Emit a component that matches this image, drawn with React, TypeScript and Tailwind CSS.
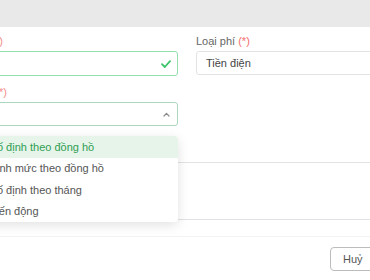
import React from 'react'

const options = [
  'Cố định theo đồng hồ',
  'Định mức theo đồng hồ',
  'Cố định theo tháng',
  'Biến động',
]

const App = () => {
  const [selected] = React.useState(0)

  return (
    <div className="w-[370px] h-[280px] overflow-hidden bg-white font-['Liberation_Sans',Arial,sans-serif] text-[11px] text-[#444]">
      <div className="h-[27px] bg-[#e9e9e9]" />

      <div className="-ml-[20px] w-[414px] pt-[7px]">
        <div className="grid grid-cols-2 gap-x-[18px]">
          {/* left column */}
          <div className="flex flex-col">
            <div className="flex justify-end w-[23px] h-[14px] leading-[14px] whitespace-nowrap mb-[3px]">
              <span className="text-[#666]">Tên phí&nbsp;</span>
              <span className="text-[#f58b8b]">(*)</span>
            </div>
            <div className="h-[25px] border border-[#93dfb0] rounded-[3px] flex items-center justify-end pr-[6px]">
              <svg width="10" height="8" viewBox="0 0 10 8" fill="none">
                <path d="M1 4.2 L3.8 7 L9 1.2" stroke="#3cc46b" strokeWidth="1.8" strokeLinecap="round" strokeLinejoin="round" />
              </svg>
            </div>

            <div className="flex justify-end w-[27px] h-[14px] leading-[14px] whitespace-nowrap mt-[9px] mb-[3px]">
              <span className="text-[#666]">Cách tính&nbsp;</span>
              <span className="text-[#f58b8b]">(*)</span>
            </div>
            <div className="relative">
              <div className="h-[24px] border border-[#a9d8bd] rounded-[3px] flex items-center justify-end pr-[7px]">
                <svg width="7" height="5" viewBox="0 0 7 5" fill="none">
                  <path d="M1 4 L3.5 1.3 L6 4" stroke="#8a8a8a" strokeWidth="1.2" strokeLinecap="round" strokeLinejoin="round" />
                </svg>
              </div>
              <div className="absolute left-0 right-0 top-[34px] z-10 bg-white rounded-[4px] shadow-[0_3px_12px_rgba(0,0,0,0.12)] overflow-hidden">
                {options.map((o, i) => (
                  <div
                    key={o}
                    className={
                      i === selected
                        ? 'h-[21.5px] flex items-center px-[9px] bg-[#e6f4ea] text-[#2f9e52]'
                        : 'h-[21.5px] flex items-center px-[9px] text-[#555]'
                    }
                  >
                    {o}
                  </div>
                ))}
              </div>
            </div>
          </div>

          {/* right column */}
          <div className="flex flex-col">
            <div className="h-[14px] leading-[14px] whitespace-nowrap mb-[3px]">
              <span className="text-[#666]">Loại phí </span>
              <span className="text-[#f26d6d]">(*)</span>
            </div>
            <div className="h-[24px] border border-[#e3e3e3] rounded-[3px] flex items-center px-[9px] text-[#444]">
              Tiền điện
            </div>
          </div>
        </div>

        <div className="mt-[19px]">
          <div className="h-[14px] leading-[14px] mb-[3px] text-[#666]">Ghi chú</div>
          <div className="h-[58px] border border-[#e2e2e6] rounded-[3px]" />
        </div>

        <div className="mt-[16px] border-t border-[#f3f3f3] pt-[10px] pl-[350px] flex gap-2">
          <button className="h-[24px] px-[12px] border border-[#bcbcbc] rounded-[4px] text-[#555] bg-white">
            Huỷ
          </button>
          <button className="h-[24px] px-[12px] rounded-[4px] text-white bg-[#2f9e52]">
            Lưu
          </button>
        </div>
      </div>
    </div>
  )
}

export default App
